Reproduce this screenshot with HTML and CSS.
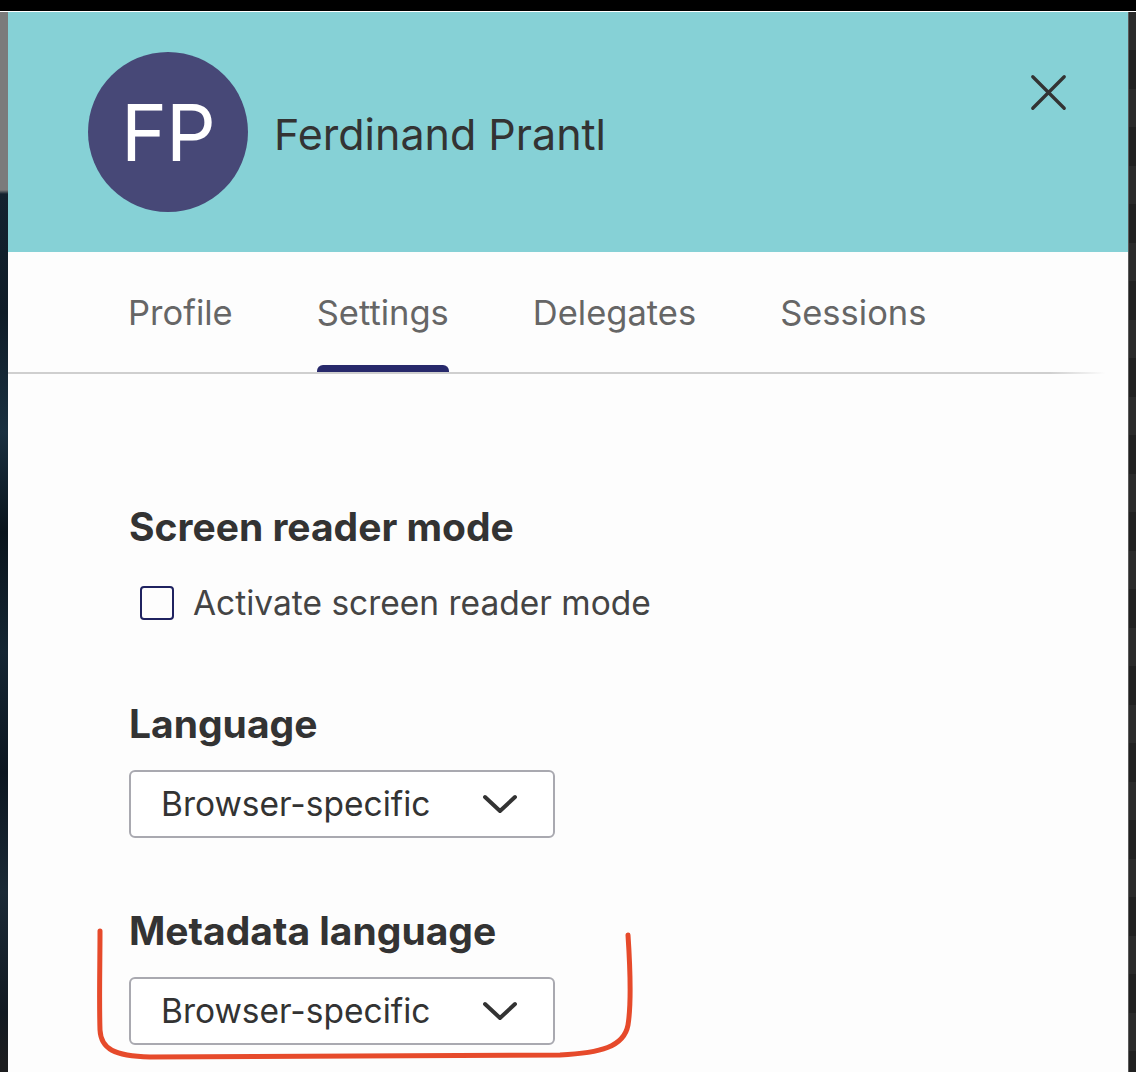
FILE: index.html
```html
<!DOCTYPE html>
<html>
<head>
	<meta charset="utf-8">
	<meta name="viewport" content="width=device-width">
	<title>User settings</title>
	<link rel="stylesheet" href="styles.css">
</head>
<body>
	<div class="topbar"></div>
	<div class="stage">
		<div class="edge edge-left"></div>
		<div class="panel">
			<header class="panel-head">
				<div class="avatar">FP</div>
				<div class="user-name">Ferdinand Prantl</div>
				<button class="close" aria-label="Close">
					<svg viewBox="0 0 40 40" width="40" height="40">
						<path d="M3 3 L37 37 M37 3 L3 37" stroke="#333" stroke-width="3.6" stroke-linecap="round" fill="none"/>
					</svg>
				</button>
			</header>
			<nav class="tabs">
				<a class="tab">Profile</a>
				<a class="tab active">Settings</a>
				<a class="tab">Delegates</a>
				<a class="tab">Sessions</a>
			</nav>
			<main class="settings">
				<section class="group">
					<h2>Screen reader mode</h2>
					<label class="check"><span class="box"></span>Activate screen reader mode</label>
				</section>
				<section class="group">
					<h2>Language</h2>
					<div class="select">
						<span>Browser-specific</span>
						<svg viewBox="0 0 36 20" width="36" height="20">
							<path d="M3 3 L18 17 L33 3" stroke="#333" stroke-width="4" stroke-linecap="round" stroke-linejoin="round" fill="none"/>
						</svg>
					</div>
				</section>
				<section class="group">
					<h2>Metadata language</h2>
					<div class="select">
						<span>Browser-specific</span>
						<svg viewBox="0 0 36 20" width="36" height="20">
							<path d="M3 3 L18 17 L33 3" stroke="#333" stroke-width="4" stroke-linecap="round" stroke-linejoin="round" fill="none"/>
						</svg>
					</div>
				</section>
			</main>
		</div>
		<div class="edge edge-right"></div>
	</div>
	<!-- hand-drawn markup around the metadata language field -->
	<svg class="annotation" viewBox="0 0 1136 1072" width="1136" height="1072">
		<path d="M100 931 C100 965 99 1000 100 1030 C101 1049 114 1056 150 1057 L560 1055 C600 1053 624 1047 628 1025 C632 1000 630 965 628 935" stroke="#e64a2b" stroke-width="5" stroke-linecap="round" fill="none"/>
	</svg>
</body>
</html>
```
FILE: styles.css
```css
html, body {
	margin: 0;
	height: 1072px;
	overflow: hidden;
}

body {
	position: relative;
	background: #000;
	font-family: Inter, "Liberation Sans", sans-serif;
	color: #333;
}

.topbar {
	height: 11px;
	background: #000;
	border-bottom: 1px solid #fff;
}

.stage {
	display: flex;
	height: 1060px;
}

.edge {
	width: 8px;
	flex: none;
}

.edge-left {
	background: linear-gradient(to bottom, #7b7b7b 0, #7b7b7b 178px, #13222f 182px, #0f1c27 300px, #1a3040 420px, #0a141c 520px, #152633 640px, #0c1620 760px, #1b2a36 880px, #121a22 1000px, #1c1d1f 1050px);
}

.edge-right {
	width: 7px;
	border-left: 1px solid #5a5a5a;
	background: repeating-linear-gradient(to bottom, #2b2b2b 0, #2b2b2b 38px, #212121 38px, #212121 77px);
}

.panel {
	flex: 1;
	display: flex;
	flex-direction: column;
	background: #fdfdfd;
}

.panel-head {
	flex: none;
	display: flex;
	align-items: center;
	height: 240px;
	padding: 0 56px 0 80px;
	background: #86d1d6;
}

.avatar {
	width: 160px;
	height: 160px;
	border-radius: 50%;
	background: #474877;
	color: #fff;
	display: flex;
	align-items: center;
	justify-content: center;
	font-size: 78px;
	letter-spacing: -1px;
}

.user-name {
	margin-left: 26px;
	font-size: 43px;
	padding-top: 4px;
}

.close {
	margin-left: auto;
	align-self: flex-start;
	margin-top: 56px;
	width: 48px;
	height: 48px;
	padding: 0;
	border: none;
	background: transparent;
	display: flex;
	align-items: center;
	justify-content: center;
}

.close svg {
	width: 37px;
	height: 37px;
}

.tabs {
	flex: none;
	display: flex;
	align-items: flex-end;
	gap: 84px;
	height: 120px;
	padding: 0 0 2px 120px;
	background: linear-gradient(to right, #cfcfcf 93%, rgba(207, 207, 207, 0) 98%) bottom / 100% 2px no-repeat;
}

.tab {
	display: flex;
	flex-direction: column;
	font-size: 34.5px;
	line-height: 40px;
	color: #666;
}

.tab::after {
	content: "";
	height: 7px;
	margin-top: 32px;
	border-radius: 6px 6px 0 0;
}

.tab.active::after {
	background: #27296b;
}

.settings {
	padding: 131px 0 0 121px;
}

.group {
	margin-bottom: 71px;
}

.group h2 {
	margin: 0;
	font-size: 39px;
	line-height: 44px;
	font-weight: 700;
	color: #333;
}

.check {
	display: flex;
	align-items: center;
	gap: 19px;
	margin-top: 34px;
	padding-left: 11px;
	padding-bottom: 8px;
	font-size: 33.5px;
	line-height: 40px;
	color: #444;
}

.box {
	width: 30px;
	height: 30px;
	border: 2px solid #1f2260;
	border-radius: 4px;
}

.select {
	display: flex;
	align-items: center;
	justify-content: space-between;
	box-sizing: border-box;
	width: 426px;
	height: 68px;
	margin-top: 24px;
	padding: 0 35px 0 30px;
	border: 2px solid #a9a9b0;
	border-radius: 6px;
	background: #fff;
	font-size: 33.5px;
	color: #333;
}

.annotation {
	position: absolute;
	left: 0;
	top: 0;
	pointer-events: none;
}
```
